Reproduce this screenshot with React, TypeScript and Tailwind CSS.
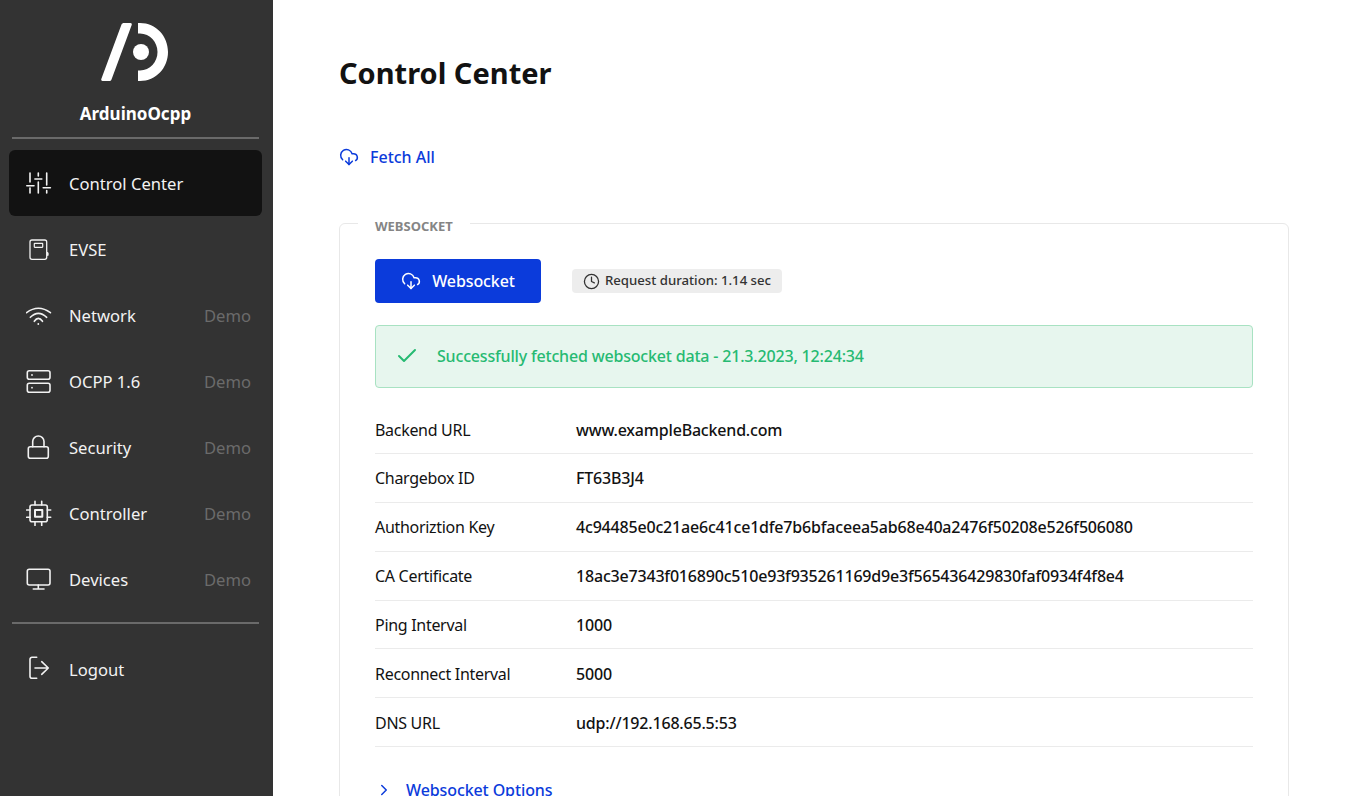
import type { ReactNode } from "react";
import { ChevronRight, Check, Clock, CloudDownload } from "lucide-react";

function Logo() {
  return (
    <svg className="mr-[2px]" width="70" height="60" viewBox="100 22 70 60" fill="#fff">
      <path d="M124 23h6.500c1 0 1.600 1 1.200 1.900L111.500 79.500c-.5 1-1.200 1.500-2.300 1.500h-6.700c-1 0-1.600-1-1.200-1.900L121.500 24.500c.5-1 1.400-1.500 2.500-1.500z" />
      <path d="M138 23h2c16 0 28 13 28 29s-12 29-28 29h-2V70.500h2c10 0 17.500-8.500 17.500-18.500S150 33.500 140 33.500h-2z" />
      <circle cx="141" cy="52" r="8" />
    </svg>
  );
}

function NavIcon({ children }: { children: ReactNode }) {
  return (
    <svg width="26" height="26" viewBox="0 0 26 26" fill="none" stroke="currentColor" strokeWidth="1.600" strokeLinecap="round" strokeLinejoin="round">
      {children}
    </svg>
  );
}

const navItems: { label: string; icon: ReactNode; demo?: boolean; active?: boolean }[] = [
  {
    label: "Control Center",
    active: true,
    icon: (
      <NavIcon>
        <path d="M4 3v9M4 18v5M.8 15.700h7.200" />
        <path d="M12.300 3v3M12.300 12v11M8.900 9h6.900" />
        <path d="M20.700 3v12M20.700 20.500v2.500M17.200 17.700h7.200" />
      </NavIcon>
    ),
  },
  {
    label: "EVSE",
    icon: (
      <NavIcon>
        <rect x="4" y="4" width="16.700" height="19.300" rx="2" strokeWidth="1.300" />
        <rect x="8.300" y="7.300" width="8.400" height="4" rx=".5" strokeWidth="1.200" />
        <path d="M21.500 16.500v3h.6v-2z" fill="currentColor" strokeWidth="1" />
      </NavIcon>
    ),
  },
  {
    label: "Network",
    demo: true,
    icon: (
      <NavIcon>
        <path d="M.6 10.700Q12.300 1.900 24.400 10.700" />
        <path d="M4.300 15.300Q12.300 7.300 20.700 15.300" />
        <path d="M8.300 19.300Q12.300 13.500 16.500 19.300" />
        <circle cx="12.300" cy="22" r=".9" fill="currentColor" stroke="none" />
      </NavIcon>
    ),
  },
  {
    label: "OCPP 1.6",
    demo: true,
    icon: (
      <NavIcon>
        <rect x="1.300" y="2.700" width="22.700" height="8.600" rx="2" />
        <rect x="1.300" y="15.300" width="22.700" height="9" rx="2" />
        <circle cx="6" cy="7" r=".9" fill="currentColor" stroke="none" />
        <circle cx="6" cy="19.700" r=".9" fill="currentColor" stroke="none" />
      </NavIcon>
    ),
  },
  {
    label: "Security",
    demo: true,
    icon: (
      <NavIcon>
        <rect x="2.300" y="12.700" width="20" height="11.600" rx="2" />
        <path d="M6.700 12.700V7.600a5.650 5.650 0 0 1 11.300 0v5.100" />
      </NavIcon>
    ),
  },
  {
    label: "Controller",
    demo: true,
    icon: (
      <NavIcon>
        <rect x="4" y="5" width="17.300" height="16.700" rx="2" />
        <rect x="9" y="10" width="7.300" height="6.700" strokeWidth="2" />
        <path d="M9 1.200V5M15.700 1.200V5M9 21.700v3.800M15.700 21.700v3.800M.6 10H4M.6 17.300H4M21.300 10h3.400M21.300 17.300h3.400" />
      </NavIcon>
    ),
  },
  {
    label: "Devices",
    demo: true,
    icon: (
      <NavIcon>
        <rect x="1.300" y="3.300" width="22.700" height="15.700" rx="2" />
        <path d="M12.300 19v4M7.300 23h10.700" />
      </NavIcon>
    ),
  },
];

const rows = [
  ["Backend URL", "www.exampleBackend.com"],
  ["Chargebox ID", "FT63B3J4"],
  ["Authoriztion Key", "4c94485e0c21ae6c41ce1dfe7b6bfaceea5ab68e40a2476f50208e526f506080"],
  ["CA Certificate", "18ac3e7343f016890c510e93f935261169d9e3f565436429830faf0934f4f8e4"],
  ["Ping Interval", "1000"],
  ["Reconnect Interval", "5000"],
  ["DNS URL", "udp://192.168.65.5:53"],
];

function NavRow({ label, icon, demo, active }: { label: string; icon: ReactNode; demo?: boolean; active?: boolean }) {
  return (
    <div className={`flex h-[66px] items-center rounded-md pl-[17px] pr-[11px] ${active ? "bg-[#121212]" : ""}`}>
      <span className="flex w-[43px] shrink-0 items-center text-[#f2f2f2]">{icon}</span>
      <span className="pt-[2px] text-[16.600px] text-[#f2f2f2]">{label}</span>
      {demo && <span className="ml-auto pt-[2px] text-[16.600px] text-[#6b6b6b]">Demo</span>}
    </div>
  );
}

export default function App() {
  return (
    <div className="flex h-screen overflow-hidden bg-white font-['Noto_Sans',sans-serif] text-[#121212]">
      <aside className="flex w-[273px] shrink-0 flex-col bg-[#333333] pr-[2px]">
        <div className="flex flex-col items-center pt-[22px]">
          <Logo />
          <div className="mt-[21px] text-[17px] font-bold leading-[22px] text-white">ArduinoOcpp</div>
        </div>
        <div className="mx-[12px] mt-[12px] h-[2px] bg-[#6a6a6a]" />
        <nav className="mt-[11px] flex flex-col px-[9px]">
          {navItems.map((item) => (
            <NavRow key={item.label} {...item} />
          ))}
        </nav>
        <div className="mx-[12px] mt-[10px] h-[2px] bg-[#6a6a6a]" />
        <div className="mt-[12px] px-[9px]">
          <NavRow
            label="Logout"
            icon={
              <NavIcon>
                <path d="M10.700 1.300H6a2 2 0 0 0-2 2v17a2 2 0 0 0 2 2h4.700" />
                <path d="M9 12h13.300M15.700 5.700l6.600 6.300-6.600 6.300" />
              </NavIcon>
            }
          />
        </div>
      </aside>

      <main className="min-w-0 flex-1 pl-[66px] pr-[64px]">
        <h1 className="mt-[52px] text-[29px] font-bold leading-[42px]">Control Center</h1>

        <button className="mt-[52px] flex items-center gap-[11px] font-medium leading-[22px] text-[#0b3bdb]">
          <CloudDownload size={20} strokeWidth={1.8} />
          Fetch All
        </button>

        <fieldset className="mt-[44.500px] rounded-md border border-[#e8e8e8] pl-[35px] pr-[35px] pb-[40px]">
          <legend className="-ml-[17px] px-[17px] pt-[5px] text-[13px] font-bold leading-[17px] text-[#858585]">WEBSOCKET</legend>

          <div className="mt-[24px] flex items-center">
            <button className="flex h-[44px] w-[166px] items-center justify-center gap-[11px] rounded bg-[#0b3bdb] font-medium tracking-[-0.1px] text-white">
              <CloudDownload size={20} strokeWidth={1.8} />
              Websocket
            </button>
            <span className="ml-[31px] flex h-[24px] w-[210px] items-center justify-center gap-[5px] rounded bg-[#ededed] pt-[1px] text-[13.200px] font-medium text-[#333333]">
              <Clock size={17} strokeWidth={1.8} />
              Request duration: 1.14 sec
            </span>
          </div>

          <div className="mt-[22px] flex h-[63px] items-center rounded border border-[#a8e2c2] bg-[#e7f6ee] pl-[19px] font-medium tracking-[-0.18px] text-[#26ba72]">
            <Check size={24} strokeWidth={2} className="mr-[18px]" />
            Successfully fetched websocket data - 21.3.2023, 12:24:34
          </div>

          <div className="mt-[17.700px]">
            {rows.map(([label, value]) => (
              <div key={label} className="flex h-[48.830px] items-center border-b border-[#ebebeb] pt-[1px]">
                <span className="w-[201px] shrink-0 tracking-[-0.3px]">{label}</span>
                <span className="font-medium tracking-[-0.19px]">{value}</span>
              </div>
            ))}
          </div>

          <button className="mt-[32.300px] flex items-center font-medium leading-[22px] tracking-[-0.1px] text-[#0b3bdb]">
            <ChevronRight size={18} strokeWidth={2} className="mr-[13px]" />
            Websocket Options
          </button>
        </fieldset>
      </main>
    </div>
  );
}
